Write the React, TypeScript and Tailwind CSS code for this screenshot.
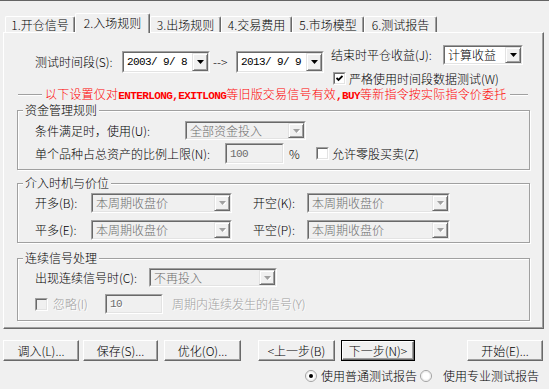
import React from 'react';

const MONO = "font-['Liberation_Mono',monospace] text-[11px] tracking-[-0.6px]";

const DropBtn = ({ disabled }: { disabled?: boolean }) => (
  <div className="h-full w-[16px] flex items-center justify-center bg-[#f0f0f0] border border-t-[#e3e3e3] border-l-[#e3e3e3] border-r-[#696969] border-b-[#696969] shadow-[inset_1px_1px_0_#fff,inset_-1px_-1px_0_#a0a0a0]">
    <svg width="7" height="4" viewBox="0 0 7 4">
      {disabled && <path d="M1 1h7L4.5 5z" fill="#fff" />}
      <path d="M0 0h7L3.5 4z" fill={disabled ? '#a0a0a0' : '#000'} />
    </svg>
  </div>
);

const Sunken = ({ cls, children, disabled }: { cls: string; children?: React.ReactNode; disabled?: boolean }) => (
  <div className={`${cls} flex border border-t-[#a0a0a0] border-l-[#a0a0a0] border-r-white border-b-white`}>
    <div
      className={`flex-1 flex min-w-0 border border-t-[#696969] border-l-[#696969] border-r-[#e3e3e3] border-b-[#e3e3e3] ${
        disabled ? 'bg-[#f0f0f0]' : 'bg-white'
      }`}
    >
      {children}
    </div>
  </div>
);

const Combo = ({ cls, text, disabled, mono }: { cls: string; text: string; disabled?: boolean; mono?: boolean }) => (
  <Sunken cls={cls} disabled={disabled}>
    <div
      className={`flex-1 flex items-center pl-[3px] whitespace-pre ${mono ? MONO : ''} ${
        disabled ? 'text-[#6d6d6d]' : 'text-black'
      }`}
    >
      {text}
    </div>
    <DropBtn disabled={disabled} />
  </Sunken>
);

const Input = ({ cls, text }: { cls: string; text: string }) => (
  <Sunken cls={cls} disabled>
    <div className={`flex-1 flex items-center pl-[3px] text-[#6d6d6d] ${MONO}`}>{text}</div>
  </Sunken>
);

const Check = ({ checked, disabled }: { checked?: boolean; disabled?: boolean }) => (
  <div className="w-[13px] h-[13px] shrink-0 flex border border-t-[#a0a0a0] border-l-[#a0a0a0] border-r-white border-b-white">
    <div
      className={`flex-1 flex items-center justify-center border border-t-[#696969] border-l-[#696969] border-r-[#e3e3e3] border-b-[#e3e3e3] ${
        disabled ? 'bg-[#f0f0f0]' : 'bg-white'
      }`}
    >
      {checked && (
        <svg width="7" height="7" viewBox="0 0 7 7">
          <path d="M0.5 3 L2.5 5 L6.5 1" stroke="#000" strokeWidth="1.8" fill="none" />
        </svg>
      )}
    </div>
  </div>
);

const Radio = ({ checked }: { checked?: boolean }) => (
  <svg width="12" height="12" viewBox="0 0 12 12" className="shrink-0">
    <circle cx="6" cy="6" r="5.5" fill="#fff" stroke="#a0a0a0" />
    <circle cx="6" cy="6" r="4.3" fill="#fff" stroke="#e3e3e3" strokeWidth="0.8" />
    {checked && <circle cx="6" cy="6" r="2" fill="#000" />}
  </svg>
);

const Btn = ({ cls, children, focused }: { cls: string; children: React.ReactNode; focused?: boolean }) => (
  <div className={`${cls} h-[21px] flex ${focused ? 'border border-black' : ''}`}>
    <div className="flex-1 flex items-center justify-center bg-[#f0f0f0] border border-t-white border-l-white border-r-[#696969] border-b-[#696969] shadow-[inset_-1px_-1px_0_#a0a0a0] whitespace-pre">
      {children}
    </div>
  </div>
);

const Group = ({ title, cls, children }: { title: string; cls: string; children: React.ReactNode }) => (
  <div className={`relative ml-[13px] w-[513px] border border-[#a0a0a0] shadow-[1px_1px_0_#fff,inset_1px_1px_0_#fff] ${cls}`}>
    <div className="absolute left-[5px] top-[-7px] bg-[#f0f0f0] px-[2px] h-[12px] leading-[12px]">{title}</div>
    {children}
  </div>
);

const tabBase =
  'flex items-center justify-center bg-[#f0f0f0] border-l border-t border-r border-l-white border-t-white border-r-[#696969] shadow-[inset_-1px_0_0_#a0a0a0] rounded-t-[2px] whitespace-pre';

export default function App() {
  return (
    <div className="w-[549px] h-[389px] overflow-hidden bg-[#f0f0f0] border-t border-[#646464] text-[12px] leading-[12px] font-light text-black font-['Noto_Sans_CJK_SC','Noto_Sans',sans-serif]">
      {/* Tabs */}
      <div className="relative z-10 mt-[12px] mb-[-1px] pl-[5px] h-[20px] flex items-end">
        <div className={`${tabBase} w-[70px] h-[16px] mb-[1px]`}>1.开仓信号</div>
        <div className={`${tabBase} w-[75px] h-[20px] pb-[2px]`}>2.入场规则</div>
        <div className={`${tabBase} w-[71px] h-[16px] mb-[1px]`}>3.出场规则</div>
        <div className={`${tabBase} w-[71px] h-[16px] mb-[1px]`}>4.交易费用</div>
        <div className={`${tabBase} w-[72px] h-[16px] mb-[1px]`}>5.市场模型</div>
        <div className={`${tabBase} w-[73px] h-[16px] mb-[1px]`}>6.测试报告</div>
      </div>

      {/* Panel */}
      <div className="ml-[3px] w-[541px] h-[297px] flex flex-col border border-l-white border-t-white border-r-[#696969] border-b-[#696969] shadow-[inset_-1px_-1px_0_#a0a0a0]">
        {/* Row A */}
        <div className="flex items-start mt-[12px]">
          <div className="ml-[31px] mt-[6px] flex items-center h-[22px]">
            <div className="w-[87px]">测试时间段(S):</div>
            <Combo cls="w-[88px] h-[22px]" text="2003/ 9/ 8" mono />
            <div className="w-[26px] pl-[3px] whitespace-pre">{'-->'}</div>
            <Combo cls="w-[88px] h-[22px]" text="2013/ 9/ 9" mono />
          </div>
          <div className="ml-[7px] flex flex-col">
            <div className="flex items-center h-[20px]">
              <div className="w-[112px]">结束时平仓收益(J):</div>
              <Combo cls="w-[80px] h-[20px]" text="计算收益" />
            </div>
            <div className="mt-[7px] ml-[2px] flex items-center gap-[3px] h-[13px]">
              <Check checked />
              <div>严格使用时间段数据测试(W)</div>
            </div>
          </div>
        </div>

        {/* Red note */}
        <div className="mt-[4px] ml-[14px] w-[510px] h-[12px] flex items-center">
          <div className="w-[24px] h-[2px] border-t border-b border-t-[#a0a0a0] border-b-white" />
          <div className="ml-[3px] text-[#ff0000] whitespace-nowrap tracking-[0.2px]">
            以下设置仅对<span className="font-['Liberation_Mono',monospace] font-bold text-[11px] tracking-[-0.6px]">ENTERLONG,EXITLONG</span>等旧版交易信号有效<span className="font-['Liberation_Mono',monospace] font-bold text-[11px] tracking-[-0.6px]">,BUY</span>等新指令按实际指令价委托
          </div>
          <div className="ml-[4px] flex-1 h-[2px] border-t border-b border-t-[#a0a0a0] border-b-white" />
        </div>

        {/* Group 1 */}
        <Group title="资金管理规则" cls="mt-[9px] h-[60px]">
          <div className="mt-[10px] ml-[17px] flex items-center h-[19px]">
            <div className="w-[150px]">条件满足时，使用(U):</div>
            <Combo cls="w-[121px] h-[19px]" text="全部资金投入" disabled />
          </div>
          <div className="mt-[3px] ml-[17px] flex items-center h-[21px]">
            <div className="w-[190px]">单个品种占总资产的比例上限(N):</div>
            <Input cls="w-[59px] h-[21px]" text="100" />
            <div className="ml-[5px] w-[27px]">%</div>
            <Check />
            <div className="ml-[3px]">允许零股买卖(Z)</div>
          </div>
        </Group>

        {/* Group 2 */}
        <Group title="介入时机与价位" cls="mt-[13px] h-[60px]">
          <div className="mt-[9px] ml-[17px] flex items-center h-[20px]">
            <div className="w-[56px]">开多(B):</div>
            <Combo cls="w-[141px] h-[20px]" text="本周期收盘价" disabled />
            <div className="ml-[21px] w-[54px]">开空(K):</div>
            <Combo cls="w-[143px] h-[20px]" text="本周期收盘价" disabled />
          </div>
          <div className="mt-[7px] ml-[17px] flex items-center h-[20px]">
            <div className="w-[56px]">平多(E):</div>
            <Combo cls="w-[141px] h-[20px]" text="本周期收盘价" disabled />
            <div className="ml-[21px] w-[54px]">平空(P):</div>
            <Combo cls="w-[143px] h-[20px]" text="本周期收盘价" disabled />
          </div>
        </Group>

        {/* Group 3 */}
        <Group title="连续信号处理" cls="mt-[15px] h-[63px]">
          <div className="mt-[9px] ml-[17px] flex items-center h-[19px]">
            <div className="w-[114px]">出现连续信号时(C):</div>
            <Combo cls="w-[128px] h-[19px]" text="不再投入" disabled />
          </div>
          <div className="mt-[7px] ml-[17px] flex items-center h-[20px] text-[#a0a0a0] [text-shadow:1px_1px_0_#fff]">
            <Check disabled />
            <div className="ml-[5px] w-[52px]">忽略(I)</div>
            <Input cls="w-[58px] h-[20px]" text="10" />
            <div className="ml-[9px]">周期内连续发生的信号(Y)</div>
          </div>
        </Group>
      </div>

      {/* Buttons */}
      <div className="mt-[11px] flex items-center">
        <Btn cls="ml-[3px] w-[76px]">调入(L)...</Btn>
        <Btn cls="ml-[4px] w-[75px]">保存(S)...</Btn>
        <Btn cls="ml-[6px] w-[77px]">优化(O)...</Btn>
        <Btn cls="ml-[17px] w-[77px]">{'<上一步(B)'}</Btn>
        <Btn cls="ml-[6px] w-[74px]" focused>
          {'下一步(N)>'}
        </Btn>
        <Btn cls="ml-[52px] w-[76px]">开始(E)...</Btn>
      </div>

      {/* Radios */}
      <div className="mt-[9px] h-[12px] flex items-center">
        <div className="ml-[305px]">
          <Radio checked />
        </div>
        <div className="ml-[4px] w-[99px]">使用普通测试报告</div>
        <Radio />
        <div className="ml-[11px]">使用专业测试报告</div>
      </div>
    </div>
  );
}
